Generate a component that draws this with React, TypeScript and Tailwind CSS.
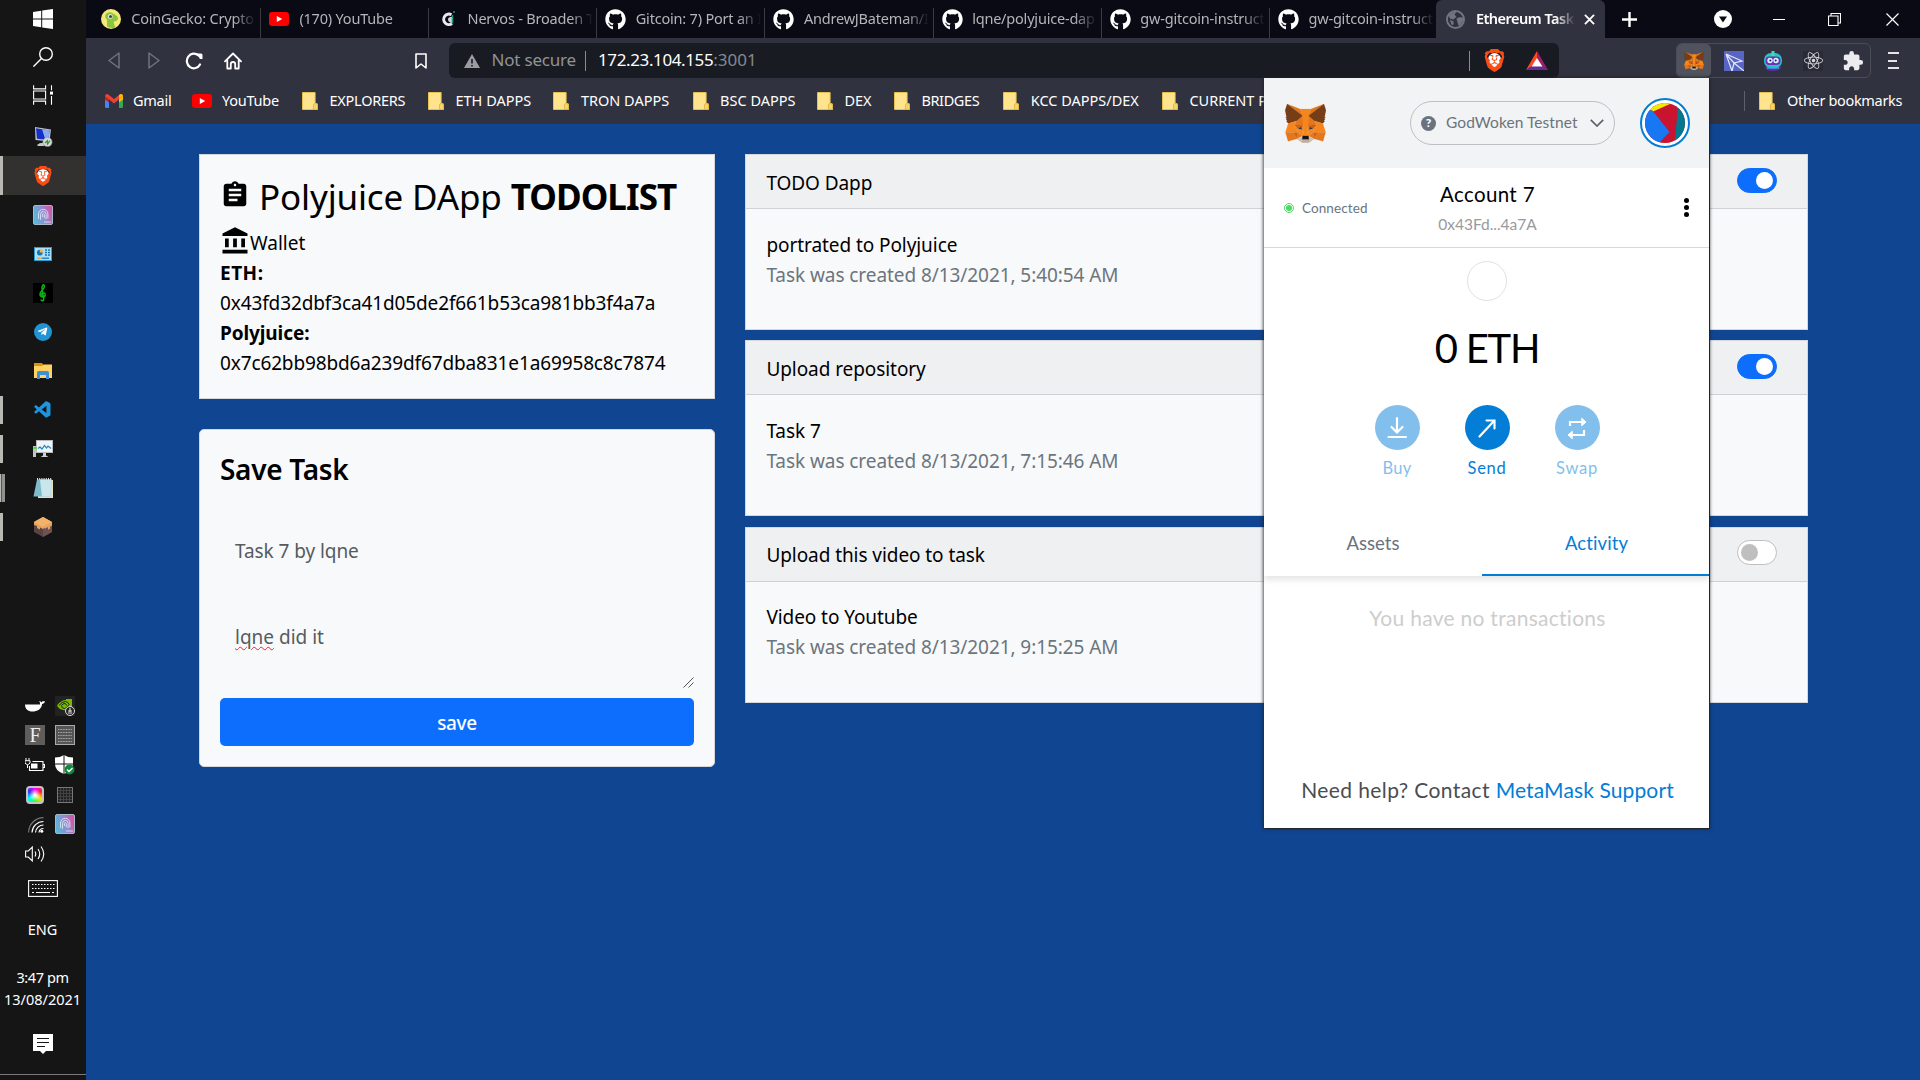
import React from 'react';
import type { ReactNode } from 'react';
import { FaGithub, FaReact, FaTelegramPlane } from 'react-icons/fa';
import { SiBrave } from 'react-icons/si';
import { MdAccountBalance, MdAssignment, MdExtension } from 'react-icons/md';
import { VscVscode } from 'react-icons/vsc';

/* ---------- shared icons ---------- */

const foxShapes: [string, string][] = [
  ['#e2761b', '274.1,35.5 174.6,109.4 193,65.8'],
  ['#e4761b', '44.4,35.5 143.1,110.1 125.6,65.8'],
  ['#e4761b', '238.3,206.8 211.8,247.4 268.5,263 284.8,207.7'],
  ['#e4761b', '33.9,207.7 50.1,263 106.8,247.4 80.3,206.8'],
  ['#e4761b', '103.6,138.2 87.8,162.1 144.1,164.6 142.1,104.1'],
  ['#e4761b', '214.9,138.2 175.9,103.4 174.6,164.6 230.8,162.1'],
  ['#e4761b', '106.8,247.4 140.6,230.9 111.4,208.1'],
  ['#e4761b', '177.9,230.9 211.8,247.4 207.1,208.1'],
  ['#d7c1b3', '211.8,247.4 177.9,230.9 180.6,253 180.3,262.3'],
  ['#d7c1b3', '106.8,247.4 138.3,262.3 138.1,253 140.6,230.9'],
  ['#cd6116', '106.8,247.4 111.6,206.8 80.3,207.7'],
  ['#cd6116', '207,206.8 211.8,247.4 238.3,207.7'],
  ['#cd6116', '230.8,162.1 174.6,164.6 179.8,193.5 188.1,176.1 208.1,185.2'],
  ['#cd6116', '110.6,185.2 130.6,176.1 138.8,193.5 144.1,164.6 87.8,162.1'],
  ['#233447', '138.8,193.5 110.6,185.2 130.5,176.1'],
  ['#233447', '179.7,193.5 188,176.1 208,185.2'],
  ['#e4751f', '87.8,162.1 111.4,208.1 110.6,185.2'],
  ['#e4751f', '208.1,185.2 207.1,208.1 230.8,162.1'],
  ['#e4751f', '144.1,164.6 138.8,193.5 145.4,227.6 146.9,182.7'],
  ['#e4751f', '174.6,164.6 171.9,182.6 173.1,227.6 179.8,193.5'],
  ['#f6851b', '179.8,193.5 173.1,227.6 177.9,230.9 207.1,208.1 208.1,185.2'],
  ['#f6851b', '110.6,185.2 111.4,208.1 140.6,230.9 145.4,227.6 138.8,193.5'],
  ['#c0ad9e', '180.3,262.3 180.6,253 178.1,250.8 140.4,250.8 138.1,253 138.3,262.3 106.8,247.4 117.8,256.4 140.1,271.9 178.4,271.9 200.8,256.4 211.8,247.4'],
  ['#161616', '177.9,230.9 173.1,227.6 145.4,227.6 140.6,230.9 138.1,253 140.4,250.8 178.1,250.8 180.6,253'],
  ['#763d16', '278.3,114.2 286.8,73.4 274.1,35.5 177.9,106.9 214.9,138.2 267.2,153.5 278.8,140 273.8,136.4 281.8,129.1 275.6,124.3 283.6,118.2'],
  ['#763d16', '31.8,73.4 40.3,114.2 34.9,118.2 42.9,124.3 36.8,129.1 44.8,136.4 39.8,140 51.3,153.5 103.6,138.2 140.6,106.9 44.4,35.5'],
  ['#f6851b', '267.2,153.5 214.9,138.2 230.8,162.1 207.1,208.1 238.3,207.7 284.8,207.7'],
  ['#f6851b', '103.6,138.2 51.3,153.5 33.9,207.7 80.3,207.7 111.4,208.1 87.8,162.1'],
  ['#f6851b', '174.6,164.6 177.9,106.9 193.1,65.8 125.6,65.8 140.6,106.9 144.1,164.6 145.3,182.8 145.4,227.6 173.1,227.6 173.3,182.8'],
];

const Fox = ({ className }: { className: string }) => (
  <svg viewBox="31 35 256 238" className={className} preserveAspectRatio="none">
    {foxShapes.map(([fill, points], i) => (
      <polygon key={i} fill={fill} stroke={fill} strokeWidth="1" points={points} />
    ))}
  </svg>
);

const YouTubeIcon = () => (
  <svg viewBox="0 0 20 14" className="h-[14px] w-5 shrink-0">
    <rect width="20" height="14" rx="3.2" fill="#f00" />
    <path d="M7.8 4v6l5.4-3z" fill="#fff" />
  </svg>
);

const BraveIcon = ({ className }: { className: string }) => (
  <span className="relative flex items-center justify-center">
    <span className="absolute h-[62%] w-[58%] rounded-full bg-white" />
    <SiBrave className={`relative text-[#fb4c14] ${className}`} />
  </span>
);

const FolderIcon = () => (
  <svg viewBox="0 0 16 18" className="h-[18px] w-4 shrink-0">
    <path d="M.5.5h12.6v11h1.4q1 0 1 1v5H.5z" fill="#ffe48d" stroke="#e6c14e" />
    <path d="M11.5 17.5v-4.4q0-1.6 1.7-1.6t2.3 1.3v4.7z" fill="#f8d468" stroke="#dfb540" strokeWidth=".9" />
  </svg>
);

const FingerprintIcon = ({ id }: { id: string }) => (
  <svg viewBox="0 0 20 20" className="size-5">
    <defs>
      <linearGradient id={id} x1="0" y1=".6" x2="1" y2=".3">
        <stop offset="0" stopColor="#58b8dc" />
        <stop offset=".5" stopColor="#8d8fd0" />
        <stop offset="1" stopColor="#dd4fa6" />
      </linearGradient>
    </defs>
    <rect x=".5" y=".5" width="19" height="19" rx="1.5" fill={`url(#${id})`} stroke="#a9b6c4" />
    <g fill="none" stroke="#dfeaf8" strokeWidth="1" opacity=".85">
      <path d="M5.5 14V9a4.7 4.7 0 0 1 9.4 0v4.5" />
      <path d="M7.5 14.8V9.3a2.8 2.8 0 0 1 5.6 0v5" />
      <path d="M9.4 12V9.4a1 1 0 0 1 1.9 0v3.8M11 17h7" />
    </g>
  </svg>
);

/* ---------- task bar ---------- */

const WindowsIcon = () => (
  <svg viewBox="0 0 20 20" className="size-5">
    <path fill="#fff" d="M0 3l8.2-1.2v7.7H0zM9.2 1.6L20 0v9.5H9.2zM0 10.5h8.2v7.7L0 17zM9.2 10.5H20V20L9.2 18.4z" />
  </svg>
);

const SearchGlyph = () => (
  <svg viewBox="0 0 20 20" className="size-5" fill="none" stroke="#fff" strokeWidth="1.4">
    <circle cx="13" cy="7" r="6.3" />
    <path d="M8.5 11.5L.4 19.6" />
  </svg>
);

const TaskViewGlyph = () => (
  <svg viewBox="0 0 20 20" className="size-5" fill="none" stroke="#fff" strokeWidth="1.1">
    <path d="M.6.3v3.6h12V.3M.6 6h12v8H.6zM.6 19.7v-3.6h12v3.6M18.5.3v5M18.5 11v8.7" />
    <rect x="17" y="6.6" width="3" height="3" fill="#fff" stroke="none" />
  </svg>
);

const RemoteIcon = () => (
  <svg viewBox="0 0 20 20" className="size-5">
    <path d="M2 0l16 2.5-1.5 12L2.5 13z" fill="#b9c3cd" />
    <path d="M3 1.2l13.6 2.2-1.2 9.6L4 11.7z" fill="#1430c8" />
    <path d="M9 2.2l7.6 1.2-1.2 9.6-3-.3z" fill="#8fa9ee" />
    <path d="M4 18q3-3 8-2l-1 3H5z" fill="#c5c9cb" />
    <circle cx="14.5" cy="15" r="4.6" fill="#d4dad4" stroke="#8e9690" strokeWidth=".6" />
    <path d="M12 16l2.4-2.5v3.6M14.6 14v3l2.4-3.4" stroke="#2a9a3d" strokeWidth="1.1" fill="none" />
  </svg>
);

const PanelIcon = () => (
  <svg viewBox="0 0 18 14" className="h-[14px] w-[18px]">
    <rect x=".5" y=".5" width="17" height="13" fill="#a9e0f8" stroke="#2d9bd2" />
    <circle cx="5.8" cy="5.6" r="2.9" fill="#1774b8" />
    <path d="M5.8 5.6V2.3a3.2 3.2 0 0 1 3.2 3.3z" fill="#f8b23a" />
    <path d="M11 3h2M14 3h2M11 5.5h2M14 5.5h2M11 8h2M14 8h2" stroke="#1774b8" strokeWidth="1.5" />
    <path d="M3 11.2h5" stroke="#f29d28" strokeWidth="1.2" />
    <path d="M8 11.2h7" stroke="#1774b8" strokeWidth="1.2" />
  </svg>
);

const ClefIcon = () => (
  <svg viewBox="0 0 20 20" className="size-5">
    <rect width="20" height="20" fill="#000" />
    <path d="M8 16.5c.5 2 3 1.5 2.7-.5L9 5.5C8.8 3 10 1.5 11 2c1.2 1-.3 4-2 5.5-2.5 2-3 6 .5 6.5 3.5 0 3.500-4.300.7-4.300-1.700 0-2 2-.8 2.600" fill="none" stroke="#0bb416" strokeWidth="1.5" />
  </svg>
);

const ExplorerIcon = () => (
  <svg viewBox="0 0 18 16" className="h-4 w-[18px]">
    <path d="M0 0h8l1.5 2H18v3H0z" fill="#d9930e" />
    <path d="M0 3h8l1.5-1.5H18V15H0z" fill="#ffd261" />
    <path d="M3 16V9.5Q3 8 4.5 8h9Q15 8 15 9.500V16h-3v-4H6v4z" fill="#3d8fdc" />
  </svg>
);

const MonitorIcon = () => (
  <svg viewBox="0 0 20 18" className="h-[18px] w-5">
    <rect x="3.5" y=".5" width="16" height="12" fill="#eef4f8" stroke="#b9b9b9" />
    <path d="M5 8.5l2-1.5 2 2 2.5-3.5 2 2.5 1.5-2 3 2.5" fill="none" stroke="#1f7fc0" strokeWidth="1.2" />
    <path d="M10 13h3v2.5l2.500 1.500h-8l2.500-1.500z" fill="#cfcfcf" />
    <rect x="0" y="6" width="3" height="11" fill="#c4c4c4" />
    <rect x=".5" y="7" width="3" height="2" fill="#3fdc2a" />
  </svg>
);

const NotepadIcon = () => (
  <svg viewBox="0 0 20 20" className="size-5">
    <path d="M5 2h15v18H5z" fill="#e7dfc4" />
    <path d="M4 1.5h14.500L17.500 18.500H.5z" fill="#7fbccb" />
    <path d="M7 1.5h11.500l-1 17H9z" fill="#c9e6ec" />
    <path d="M4 1h15" stroke="#dce5e8" strokeWidth="2" strokeDasharray="1 1.2" />
  </svg>
);

const BlockIcon = () => (
  <svg viewBox="0 0 18 20" className="h-5 w-[18px]">
    <path d="M9 0l9 5v10l-9 5-9-5V5z" fill="#5a4345" />
    <path d="M9 10l9-5v10l-9 5z" fill="#6d5254" />
    <path d="M9 0l9 5v3.500l-2 1.200v2l-2 1V10l-3 1.800v-1L9 12l-3-1.500v2L3 11V9L0 8V5z" fill="#e8a35a" />
    <path d="M9 0l9 5-9 5-9-5z" fill="#f2b26b" />
  </svg>
);

type TaskItem = { icon: ReactNode; state?: 'running' | 'multiple' | 'active' };

const taskItems: TaskItem[] = [
  { icon: <RemoteIcon /> },
  { icon: <BraveIcon className="size-[20px]" />, state: 'active' },
  { icon: <FingerprintIcon id="fp-task" /> },
  { icon: <PanelIcon /> },
  { icon: <ClefIcon /> },
  {
    icon: (
      <span className="flex size-[18px] items-center justify-center rounded-full bg-[#2294d2]">
        <FaTelegramPlane className="mr-0.5 size-[11px] text-white" />
      </span>
    ),
  },
  { icon: <ExplorerIcon /> },
  { icon: <VscVscode className="size-5 text-[#1f95e0]" />, state: 'running' },
  { icon: <MonitorIcon />, state: 'running' },
  { icon: <NotepadIcon />, state: 'multiple' },
  { icon: <BlockIcon />, state: 'running' },
];

const TaskButton = ({ icon, state }: TaskItem) => (
  <div className={`flex h-[39px] items-center ${state === 'active' ? 'bg-[#32312f]' : ''}`}>
    <div className="flex w-[33px] items-center">
      {state === 'active' && <span className="h-[39px] w-[3px] bg-[#b9b9b3]" />}
      {state === 'running' && <span className="h-[28px] w-[3px] bg-[#b9b9b3]" />}
      {state === 'multiple' && (
        <>
          <span className="h-[28px] w-px bg-[#b9b9b3]" />
          <span className="h-[28px] w-1 border-l border-[#555] bg-[#90908c]" />
        </>
      )}
    </div>
    <div className="flex w-5 justify-center">{icon}</div>
  </div>
);

const trayIcons: ReactNode[] = [
  <svg viewBox="0 0 20 12" className="h-3 w-5">
    <path d="M0 4.500h15c0-2 0-2.500-1-3.500 1.500 0 2 .8 2.300 1.500.5-.8 1.700-1.500 3.700-1-.3 1.500-1.800 2.500-3 2.500C17 9 12 11.500 7.500 11.500S0 9 0 4.500z" fill="#fff" />
  </svg>,
  <svg viewBox="0 0 20 20" className="size-5">
    <rect width="20" height="20" fill="#222" />
    <path d="M2 9.500Q6 4 11 4V3h6v11h-6Q5 15 2 9.500z" fill="#76b900" />
    <path d="M4 9.500q3-4 6.500-4 3 .5 3.500 3-2 4-4.500 4-3 0-3-3 1-2 3.500-2 1.500.5 1.500 2" fill="none" stroke="#222" strokeWidth="1" />
    <circle cx="15" cy="15" r="4.5" fill="#222" stroke="#ddd" strokeWidth="1" />
    <path d="M15 12v4M13 15h4M12.800 17h4.400" stroke="#ddd" strokeWidth="1.2" />
  </svg>,
  <span className="flex size-5 items-center justify-center bg-[#5d5d5d] font-['Liberation_Serif'] text-[20px] leading-none text-[#eee]">F</span>,
  <svg viewBox="0 0 20 20" className="size-5">
    <rect x=".5" y=".5" width="19" height="19" fill="#555" stroke="#aaa" />
    <path d="M3 4.500h14M3 7.500h14M3 10.500h14M3 13.500h14M3 16.500h14" stroke="#aaa" strokeWidth="1" strokeDasharray="1 .6" />
  </svg>,
  <svg viewBox="0 0 20 14" className="h-[14px] w-5" fill="none" stroke="#fff">
    <path d="M7.500 3.500h10.500v9H4.500V8M18.500 6.500h1v3h-1" strokeWidth="1.1" />
    <path d="M6 5.500h6.500v5H6z" fill="#fff" stroke="none" />
    <path d="M1 0v2.500M4 0v2.500M0 2.700h5V5Q4 6.500 2.500 6.500T0 5zM2.500 7v3" strokeWidth="1" />
  </svg>,
  <svg viewBox="0 0 20 20" className="size-5">
    <path d="M9 0q4 2.500 9 2.500V9q0 7-9 10Q0 16 0 9V2.500Q5 2.500 9 0z" fill="#fff" />
    <path d="M9 0v19M0 9h18" stroke="#151515" strokeWidth="1" />
    <circle cx="14.5" cy="14.5" r="5" fill="#10893e" />
    <path d="M12 14.500l2 2 3.500-3.500" fill="none" stroke="#fff" strokeWidth="1.3" />
  </svg>,
  <span className="size-[18px] rounded border-2 border-[#c4c4c4] bg-[conic-gradient(#f0f,#f22,#fd0,#3f3,#0ff,#33f,#f0f)]">
    <span className="block size-full bg-[radial-gradient(#fff_5%,transparent_60%)]" />
  </span>,
  <svg viewBox="0 0 16 16" className="size-4">
    <rect x=".5" y=".5" width="15" height="15" fill="#222" stroke="#777" />
    <path d="M3.500 1v14M6.500 1v14M9.500 1v14M12.500 1v14M1 3.500h14M1 6.500h14M1 9.500h14M1 12.500h14" stroke="#484848" strokeWidth=".8" />
  </svg>,
  <svg viewBox="0 0 16 16" className="mt-0.5 ml-0.5 size-4" fill="none" strokeWidth="1.2">
    <path d="M.6 15.500A15 15 0 0 1 15.500.6" stroke="#777" />
    <path d="M4 15.500A11.500 11.500 0 0 1 15.500 4.500M7.500 15.500a8 8 0 0 1 8-7.500M11 15.500a4.500 4.500 0 0 1 4.500-4" stroke="#fff" />
    <circle cx="13.8" cy="14.2" r="1.5" fill="#fff" />
  </svg>,
  <FingerprintIcon id="fp-tray" />,
  <svg viewBox="0 0 20 18" className="h-[18px] w-5" fill="none" stroke="#fff" strokeWidth="1.1">
    <path d="M.6 6h2.700l4-4v14l-4-4H.6zM10 6.500q1.500 2.500 0 5M13 4q3.500 5 0 10M16 1.500q5.500 7.500 0 15" />
  </svg>,
];

const TaskBar = () => (
  <aside className="flex h-full w-[86px] shrink-0 flex-col bg-[#151515] font-['Noto_Sans',sans-serif] text-[14.5px] text-white">
    <div className="flex h-[38px] items-center justify-center"><WindowsIcon /></div>
    <div className="flex h-[38px] items-center justify-center"><SearchGlyph /></div>
    <div className="flex h-[38px] items-center justify-center"><TaskViewGlyph /></div>
    <div className="mt-[3px] flex flex-col">
      {taskItems.map((item, i) => <TaskButton key={i} {...item} />)}
    </div>
    <div className="mt-[145px] grid auto-rows-[29.6px] grid-cols-[30px_30px] pl-5">
      {trayIcons.map((icon, i) => <div key={i} className="flex items-center justify-center">{icon}</div>)}
    </div>
    <div className="flex h-10 items-center justify-center">
      <svg viewBox="0 0 30 17" className="h-[17px] w-[30px]" fill="none" stroke="#fff" strokeWidth="1.1">
        <rect x=".6" y=".6" width="28.8" height="15.8" />
        <path d="M4 4.500h23M4 8.500h23" strokeDasharray="1.5 1.5" />
        <path d="M4 12.500h2M8 12.500h14M24 12.500h2" />
      </svg>
    </div>
    <div className="flex h-[42px] items-center justify-center pr-px">ENG</div>
    <div className="mt-[15px] flex flex-col items-center pr-px leading-[22px]">
      <span className="tracking-[-0.4px]">3:47 pm</span>
      <span>13/08/2021</span>
    </div>
    <div className="mt-6 flex justify-center">
      <svg viewBox="0 0 20 20" className="size-5">
        <path d="M0 0h20v17h-7l-3 3-3-3H0z" fill="#fff" />
        <path d="M4 4.500h12M4 8.500h12M4 12.500h8" stroke="#151515" strokeWidth="1.1" />
      </svg>
    </div>
    <div className="mt-[20px] h-px bg-[#7b7b7b]" />
  </aside>
);

/* ---------- browser chrome ---------- */

const GeckoIcon = () => (
  <svg viewBox="0 0 20 20" className="size-5">
    <circle cx="10" cy="10" r="10" fill="#f4e878" />
    <path d="M6 17.500V10.500Q3.500 9 4.500 5.500 7.500 1.500 12 4.500q5.500 2.500 5 5.500-1 2.500-4.500 2.500.5 3 2 6-4.500 1.500-8.500-1z" fill="#8bc53f" />
    <circle cx="9.3" cy="7.5" r="2.3" fill="#fff" />
    <circle cx="9.5" cy="7.5" r="1.6" fill="#444" />
  </svg>
);

const NervosIcon = () => (
  <svg viewBox="0 0 16 18" className="h-[18px] w-4">
    <path d="M11.500 4.800A5.200 5.200 0 1 0 12 13.500" fill="none" stroke="#e9e9f4" strokeWidth="3" />
    <path d="M12 6.800q-4 0-4 2.700t4 3.500z" fill="#cfd3e6" />
    <path d="M12.500 5v8.500" stroke="#1d9c70" strokeWidth="1.5" />
    <circle cx="14" cy="2" r="1" fill="#2f8d74" />
  </svg>
);

const GlobeIcon = () => (
  <svg viewBox="0 0 20 20" className="size-[19px]">
    <circle cx="10" cy="10" r="9" fill="#2f3140" stroke="#73757e" strokeWidth="2" />
    <path d="M3 6q3-4 8-4.500L9 5l2 2-3 3-4-1zM11 9l3-1.500 4 .5q.5 6-4.500 9l-1.500-4z" fill="#73757e" />
    <path d="M4 10l4 2v3l-2 1z" fill="#73757e" />
  </svg>
);

const GithubTabIcon = () => <FaGithub className="size-[21px] text-white" />;

const tabs: { title: string; icon: ReactNode }[] = [
  { title: 'CoinGecko: Crypto', icon: <GeckoIcon /> },
  { title: '(170) YouTube', icon: <YouTubeIcon /> },
  { title: 'Nervos - Broaden T', icon: <NervosIcon /> },
  { title: 'Gitcoin: 7) Port an I', icon: <GithubTabIcon /> },
  { title: 'AndrewJBateman/I', icon: <GithubTabIcon /> },
  { title: 'lqne/polyjuice-dap', icon: <GithubTabIcon /> },
  { title: 'gw-gitcoin-instruct', icon: <GithubTabIcon /> },
  { title: 'gw-gitcoin-instruct', icon: <GithubTabIcon /> },
];

const TabStrip = () => (
  <div className="flex h-[38px] shrink-0 bg-[#0a0a14] pl-[6.7px] text-[14.5px]">
    {tabs.map((tab, i) => (
      <div key={i} className="flex w-[168.2px] shrink-0 items-center pl-[6.5px]">
        <span className="flex w-6 shrink-0 justify-center">{tab.icon}</span>
        <span className="mb-[1.5px] ml-[8px] h-[22px] w-[125px] shrink-0 overflow-hidden leading-[22px] tracking-[-0.2px] whitespace-nowrap text-[#b4b5ba] mask-r-from-82%">
          {tab.title}
        </span>
        <span className={`mt-2 ml-auto h-[30px] w-px ${i < 7 ? 'bg-[#3b3b41]' : ''}`} />
      </div>
    ))}
    <div className="-ml-[2.3px] flex w-[169px] shrink-0 items-center rounded-t-md bg-[#31323f] pl-[10px]">
      <GlobeIcon />
      <span className="mb-[1.5px] ml-[11px] h-[22px] w-[99px] overflow-hidden leading-[22px] font-semibold tracking-[-0.5px] whitespace-nowrap text-white mask-r-from-80%">
        Ethereum Task
      </span>
      <svg viewBox="0 0 12 12" className="ml-[9px] size-[11px]" stroke="#fff" strokeWidth="2"><path d="M1 1l10 10M11 1L1 11" /></svg>
    </div>
    <svg viewBox="0 0 15 15" className="mt-[11.5px] ml-[17.5px] size-[15px]" stroke="#fff" strokeWidth="2.4"><path d="M7.500 0v15M0 7.500h15" /></svg>
    <div className="ml-auto flex items-center pr-[21px]">
      <svg viewBox="0 0 18 18" className="mr-[41px] size-[18px]">
        <circle cx="9" cy="9" r="9" fill="#fff" />
        <path d="M5 6.500h8L9 12.500z" fill="#0a0a14" />
      </svg>
      <span className="mr-[43px] h-px w-3 bg-white" />
      <svg viewBox="0 0 13 13" className="mr-[45px] size-[13px]" fill="none" stroke="#fff" strokeWidth="1.1">
        <path d="M.5 3h9.500v9.500H.5zM3 3V.5h9.500V10H10" />
      </svg>
      <svg viewBox="0 0 13 13" className="size-[13px]" stroke="#fff" strokeWidth="1.2"><path d="M.5.5l12 12M12.500.5l-12 12" /></svg>
    </div>
  </div>
);

const KnightIcon = () => (
  <svg viewBox="0 0 20 20" className="size-5">
    <ellipse cx="10" cy="16.5" rx="8" ry="3.5" fill="#5a2ea8" />
    <rect x="1" y="2" width="18" height="15" rx="7" fill="#2cc4c0" />
    <path d="M10 0v5" stroke="#38e0b8" strokeWidth="3" />
    <rect x="2.5" y="5.500" width="15" height="8.500" rx="4" fill="#6c2fb6" />
    <circle cx="7" cy="9.500" r="2.700" fill="#d8f4ff" />
    <circle cx="13" cy="9.500" r="2.700" fill="#d8f4ff" />
    <circle cx="7.300" cy="9.500" r="1" fill="#2a1a60" />
    <circle cx="12.700" cy="9.500" r="1" fill="#2a1a60" />
    <path d="M4 17h12" stroke="#3ca5e8" strokeWidth="1.5" />
  </svg>
);

const Toolbar = () => (
  <div className="flex h-10 shrink-0 items-start pt-[5px]">
    <div className="flex h-[35px] w-[363px] shrink-0 items-center pl-[22px]">
      <svg viewBox="0 0 12 17" className="h-[17px] w-3" fill="none" stroke="#70727c" strokeWidth="1.5" strokeLinejoin="round"><path d="M11 1v15L1 8.500z" /></svg>
      <svg viewBox="0 0 12 17" className="ml-[28px] h-[17px] w-3" fill="none" stroke="#70727c" strokeWidth="1.5" strokeLinejoin="round"><path d="M1 1v15l10-7.500z" /></svg>
      <svg viewBox="0 0 18 18" className="ml-[25px] size-[18px]" fill="none" stroke="#fff" strokeWidth="2.2" strokeLinecap="round">
        <path d="M13.500 3.500A7 7.300 0 1 0 15 12.500" /><path d="M11.500 1.500h4.500a1.500 1.500 0 0 1 1.500 1.500v4h-2.500z" fill="#fff" stroke="none" />
      </svg>
      <svg viewBox="0 0 18 18" className="ml-[21px] size-[18px]" fill="none" stroke="#fff" strokeWidth="1.8" strokeLinejoin="round" strokeLinecap="round">
        <path d="M1 9.300L9 1.500l8 7.800M3.300 8.500V16.500h3.500V12q0-2 2.200-2t2.200 2v4.500h3.500v-8" />
      </svg>
      <svg viewBox="0 0 12 16" className="ml-[173px] h-4 w-3" fill="none" stroke="#fff" strokeWidth="1.6" strokeLinejoin="round"><path d="M1 1h10v14l-5-4-5 4z" /></svg>
    </div>
    <div className="flex h-[35px] w-[1110px] shrink-0 items-center rounded-md bg-[#191b22] pl-[15px] text-[17px]">
      <svg viewBox="0 0 16 14" className="h-[14px] w-4"><path d="M8 0l8 14H0z" fill="#9b9ca0" /><path d="M8 5v4.500M8 11v1.500" stroke="#191b22" strokeWidth="1.6" /></svg>
      <span className="mb-px ml-[11.5px] w-[84.5px] tracking-[-0.2px] whitespace-nowrap text-[#8f9398]">Not secure</span>
      <span className="ml-[9px] h-5 w-px bg-[#8a8b8f]" />
      <span className="mb-px ml-[12px] tracking-[-0.38px] text-white">172.23.104.155<span className="tracking-normal text-[#85898d]">:3001</span></span>
      <span className="ml-auto h-5 w-px bg-[#8a8b8f]" />
      <span className="ml-[13px]"><BraveIcon className="size-[23px]" /></span>
      <svg viewBox="0 0 22 19" className="mr-[11px] ml-[20px] h-[19px] w-[22px]">
        <path d="M11 0L0 19l11-7z" fill="#ff4724" />
        <path d="M11 0l11 19-11-7z" fill="#9e1f63" />
        <path d="M0 19h22l-6-5H7z" fill="#662d91" />
        <path d="M11 7l5.500 8.500h-11z" fill="#fff" />
      </svg>
    </div>
    <div className="ml-[117px] flex h-[35px] w-[195px] shrink-0 items-center rounded-md border border-[#4a4c58]">
      <div className="flex h-full w-[34px] items-center justify-center rounded-[5px] bg-[#50525d]"><Fox className="h-[18px] w-5" /></div>
      <svg viewBox="0 0 20 20" className="ml-[12.5px] size-5">
        <rect width="20" height="20" fill="#5865c4" />
        <path d="M2 3l16 7-8 2-2 8M2 3l8 9 10 8M2 3l6 17" fill="none" stroke="#e6e9fb" strokeWidth="1.2" />
      </svg>
      <span className="ml-[19.5px]"><KnightIcon /></span>
      <span className="ml-[20px] flex size-5 items-center justify-center bg-[#282a36]"><FaReact className="size-[19px] text-[#d9dadd]" /></span>
      <MdExtension className="ml-[19px] size-[22px] text-[#ececee]" />
    </div>
    <div className="mt-[9px] ml-[17px] flex flex-col items-start gap-[5.5px]">
      <span className="h-0.5 w-[11px] bg-[#e5e5e7]" /><span className="h-0.5 w-[9px] bg-[#e5e5e7]" /><span className="h-0.5 w-[11px] bg-[#e5e5e7]" />
    </div>
  </div>
);

const bookmarks: { label: string; box: string }[] = [
  { label: 'EXPLORERS', box: 'w-[126px] tracking-[-0.25px]' },
  { label: 'ETH DAPPS', box: 'w-[125.4px]' },
  { label: 'TRON DAPPS', box: 'w-[139.2px]' },
  { label: 'BSC DAPPS', box: 'w-[124.4px]' },
  { label: 'DEX', box: 'w-[77px]' },
  { label: 'BRIDGES', box: 'w-[109.3px] tracking-[-0.4px]' },
  { label: 'KCC DAPPS/DEX', box: 'w-[158.7px]' },
  { label: 'CURRENT PROJ', box: 'w-[120px]' },
];

const BookmarksBar = () => (
  <div className="flex h-[46px] shrink-0 items-center pl-[19px] text-[14.5px] text-white">
    <svg viewBox="0 0 18 14" className="h-[14px] w-[18px]">
      <path d="M0 2v10.500Q0 14 1.500 14H4V5z" fill="#4285f4" />
      <path d="M18 2v10.500q0 1.500-1.500 1.500H14V5z" fill="#34a853" />
      <path d="M14 1.500L18 2v3.500l-4 3z" fill="#fbbc04" />
      <path d="M0 2l4-.5v7l-4-3z" fill="#c5221f" />
      <path d="M0 2Q.5-.5 3 .3L9 5l6-4.700q2.500-.8 3 1.700L9 9.500z" fill="#ea4335" />
      <path d="M14 1.200v3.800L18 2Q17.500-.5 15 .3z" fill="#fbbc04" />
    </svg>
    <span className="ml-[10px] w-[39px] tracking-[-0.25px]">Gmail</span>
    <span className="ml-[20px] flex"><YouTubeIcon /></span>
    <span className="ml-[10px] w-[80px] tracking-[-0.24px]">YouTube</span>
    {bookmarks.map((b) => (
      <div key={b.label} className={`flex shrink-0 items-center gap-[11.5px] overflow-hidden whitespace-nowrap ${b.box}`}>
        <FolderIcon />
        {b.label}
      </div>
    ))}
    <span className="ml-auto h-5 w-px bg-[#5d5f69]" />
    <div className="ml-[14px] flex w-[161px] items-center gap-[12px] tracking-[-0.33px] whitespace-nowrap">
      <FolderIcon />
      Other bookmarks
    </div>
  </div>
);

/* ---------- web page ---------- */

const tasks = [
  { title: 'TODO Dapp', text: 'portrated to Polyjuice', time: '8/13/2021, 5:40:54 AM', done: true },
  { title: 'Upload repository', text: 'Task 7', time: '8/13/2021, 7:15:46 AM', done: true },
  { title: 'Upload this video to task', text: 'Video to Youtube', time: '8/13/2021, 9:15:25 AM', done: false },
];

const Toggle = ({ on }: { on: boolean }) => (
  <span
    className={`flex h-[25px] w-10 items-center rounded-full border px-[3px] ${
      on ? 'justify-end border-[#0d6efd] bg-[#0d6efd]' : 'justify-start border-[#bfbfbf] bg-white'
    }`}
  >
    <span className={`size-[17px] rounded-full ${on ? 'bg-white' : 'bg-[#bfbfbf]'}`} />
  </span>
);

const TaskCard = ({ title, text, time, done }: (typeof tasks)[number]) => (
  <article className="flex h-[176px] flex-col border border-[#d5d8db] bg-[#f8f9fa] tracking-[-0.07px]">
    <header className="flex h-[54px] items-start justify-between border-b border-[#cfd2d4] bg-[#eff0f2] pr-[30px] pl-[20.4px]">
      <span className="mt-[12.8px] leading-[31px]">{title}</span>
      <span className="mt-[12.6px]"><Toggle on={done} /></span>
    </header>
    <div className="pt-[20.9px] pl-[20.4px] leading-[30px]">
      <p>{text}</p>
      <p className="text-[#6c757d]">Task was created {time}</p>
    </div>
  </article>
);

const ProfileCard = () => (
  <section className="h-[245px] border border-[#d5d8db] bg-[#f8f9fa] pt-[20.5px] pl-[20px] leading-[30px]">
    <h1 className="mb-[10px] flex h-[42px] items-center text-[35px] tracking-[-0.15px]">
      <MdAssignment className="mr-[9px] -mt-[4px] size-[30px]" />
      Polyjuice DApp&nbsp;<strong className="tracking-[-0.95px]">TODOLIST</strong>
    </h1>
    <p className="flex items-center">
      <MdAccountBalance className="mt-[-3px] size-[30px]" />
      Wallet
    </p>
    <p className="font-bold tracking-[0.5px]">ETH:</p>
    <p className="tracking-[-0.12px]">0x43fd32dbf3ca41d05de2f661b53ca981bb3f4a7a</p>
    <p className="font-bold tracking-[-0.1px]">Polyjuice:</p>
    <p className="tracking-[-0.13px]">0x7c62bb98bd6a239df67dba831e1a69958c8c7874</p>
  </section>
);

const SaveCard = () => (
  <section className="mt-[30px] flex h-[338px] flex-col rounded-[5px] border border-[#d5d8db] bg-[#f8f9fa] px-5">
    <h2 className="mt-[21px] h-[36px] text-[28px] leading-[36px] font-semibold tracking-[-0.3px]">Save Task</h2>
    <div className="mt-[49px] pl-[15px] leading-[30px] tracking-[-0.07px] text-[#555b61]">Task 7 by lqne</div>
    <div className="mt-[56px] flex h-[66px] justify-between pl-[15px] leading-[30px] text-[#555b61]">
      <p>
        <span className="underline decoration-[#e8282d] decoration-wavy decoration-1 underline-offset-[2px]">lqne</span> did it
      </p>
      <svg viewBox="0 0 11 11" className="size-[11px] self-end" stroke="#555" strokeWidth="1"><path d="M.5 10.500l10-10M5.500 10.500l5-5" /></svg>
    </div>
    <button className="mt-[10px] h-12 w-full rounded-[5px] bg-[#0d6efd] pt-[2px] font-medium tracking-[-0.4px] text-white">save</button>
  </section>
);

/* ---------- wallet popup ---------- */

const WalletAction = ({ label, disabled, children, tracking }: { label: string; disabled?: boolean; children: ReactNode; tracking: string }) => (
  <div className="flex w-[90px] flex-col items-center">
    <span className={`flex size-[45px] items-center justify-center rounded-full ${disabled ? 'bg-[#82bfec]' : 'bg-[#037dd6]'}`}>
      <svg viewBox="0 0 24 24" className="size-6" fill="none" stroke="#fff" strokeWidth="2.2" strokeLinecap="round">{children}</svg>
    </span>
    <span className={`mt-[8px] text-[16.5px] leading-5 ${tracking} ${disabled ? 'text-[#82bfec]' : 'text-[#037dd6]'}`}>{label}</span>
  </div>
);

const WalletPopup = () => (
  <div className="absolute top-[78px] left-[1264px] flex h-[750px] w-[445px] flex-col bg-white font-[Lato,sans-serif] text-[20px] text-black shadow-[0_0_3px_1px_rgba(30,34,40,0.75),1px_1px_0_#232a35]">
    <header className="flex h-[90px] shrink-0 items-center bg-[#f2f3f4] pr-[19px] pl-[21px]">
      <Fox className="h-[39px] w-[41px]" />
      <div className="ml-auto flex h-11 w-[205px] items-center rounded-full border border-[#bbc0c5] pl-[10px]">
        <span className="flex size-[15px] items-center justify-center rounded-full bg-[#6a737d] text-[12px] leading-none font-black text-white">?</span>
        <span className="ml-[10px] w-[134px] text-[15.5px] tracking-[0.07px] whitespace-nowrap text-[#6a737d]">GodWoken Testnet</span>
        <svg viewBox="0 0 14 8" className="ml-[9.5px] h-2 w-[14px]" fill="none" stroke="#5a626b" strokeWidth="1.7"><path d="M.8.8L7 7 13.200.8" /></svg>
      </div>
      <div className="ml-[25px] flex size-[50px] items-center justify-center rounded-full border-2 border-[#037dd6] bg-white">
        <svg viewBox="0 0 40 40" className="size-10 rounded-full">
          <rect width="40" height="40" fill="#c8142f" />
          <path d="M33.500 0H40v40H29.500z" fill="#01788e" />
          <path d="M0 0H28L25 1 7 9z" fill="#f3e600" />
          <path d="M-2 10L7 7 24.500 29 14 40H-2z" fill="#1877f2" />
        </svg>
      </div>
    </header>
    <div className="grid h-[80px] shrink-0 grid-cols-[140px_165px_140px] border-b border-[#d6d9dc]">
      <div className="flex items-center pl-[20px] text-[13.5px] tracking-[0.1px] text-[#6a737d]">
        <span className="flex size-[10px] items-center justify-center rounded-full border border-[#4cd964]"><span className="size-[6px] rounded-full bg-[#4cd964]" /></span>
        <span className="mt-px ml-[8px]">Connected</span>
      </div>
      <div className="flex flex-col items-center pt-[11px] pl-[2px]">
        <span className="text-[20.5px] leading-[30px] tracking-[0.35px]">Account 7</span>
        <span className="mt-[4px] text-[15.5px] leading-[22px] text-[#989a9b]">0x43Fd...4a7A</span>
      </div>
      <div className="flex flex-col items-end justify-center gap-[1.5px] pr-[20px]">
        <span className="size-[5.5px] rounded-full bg-black" /><span className="size-[5.5px] rounded-full bg-black" /><span className="size-[5.5px] rounded-full bg-black" />
      </div>
    </div>
    <div className="flex shrink-0 flex-col items-center pl-px">
      <span className="mt-[13px] size-10 rounded-full border border-[#dfe1e3]" />
      <span className="mt-[22px] h-[50px] text-[40px] leading-[50px] tracking-[-1.2px]">0 ETH</span>
      <div className="mt-[32px] flex">
        <WalletAction label="Buy" disabled tracking="tracking-[0.3px]"><path d="M12 2v14M6.500 11l5.500 5.500 5.500-5.500M3.500 21h17.500" /></WalletAction>
        <WalletAction label="Send" tracking="tracking-[0.7px]"><path d="M4.500 20.500L19 5M11.500 4.500H19.500V12.500" /></WalletAction>
        <WalletAction label="Swap" disabled tracking="tracking-[0.7px]"><path d="M5 10V6h12M19 14v5H7" strokeLinecap="butt" /><path d="M17 2.500L21 6l-4 3.500zM7 15.500L3 19l4 3.500z" fill="#fff" strokeWidth="1" /></WalletAction>
      </div>
    </div>
    <div className="mt-[35px] flex h-[63px] shrink-0 text-[18.5px] shadow-[0_4px_6px_rgba(0,0,0,0.1)]">
      <div className="flex w-[218px] justify-center pt-[15px] leading-[31px] text-[#6a737d]">Assets</div>
      <div className="flex flex-1 justify-center border-b-2 border-[#037dd6] pt-[15px] pl-[2px] leading-[31px] tracking-[0.1px] text-[#037dd6]">Activity</div>
    </div>
    <p className="mt-[27px] pl-[2px] text-center text-[21px] leading-[30px] tracking-[0.28px] text-[#cdcdcd]">You have no transactions</p>
    <p className="mt-auto pb-[23px] pl-[2px] text-center text-[21px] leading-[30px] tracking-[0.4px] text-[#4a4d51]">
      Need help? Contact <span className="tracking-[0.12px] text-[#037dd6]">MetaMask Support</span>
    </p>
  </div>
);

export default function App() {
  return (
    <div className="flex h-[1080px] w-[1920px] overflow-hidden bg-[#0f4591] font-['Noto_Sans',sans-serif]">
      <TaskBar />
      <div className="flex min-w-0 flex-1 flex-col bg-[#31323f]">
        <TabStrip />
        <Toolbar />
        <BookmarksBar />
        <main className="flex flex-1 items-start gap-[30px] bg-[#0f4591] pt-[30px] pl-[113px] text-[19px] text-black">
          <div className="w-[516px]">
            <ProfileCard />
            <SaveCard />
          </div>
          <div className="flex w-[1063px] flex-col gap-[10.3px]">
            {tasks.map((task) => <TaskCard key={task.title} {...task} />)}
          </div>
        </main>
      </div>
      <WalletPopup />
    </div>
  );
}
